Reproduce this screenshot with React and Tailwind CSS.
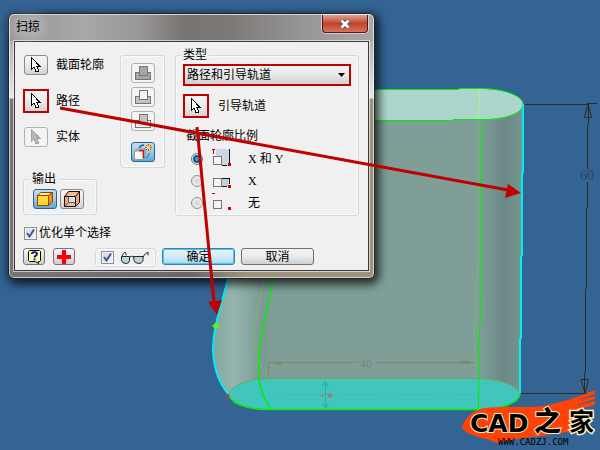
import { useState } from "react";

const toolButton =
  "flex h-5 w-6 shrink-0 items-center justify-center rounded-[3px] border border-[#8a8a8a] bg-linear-to-b from-[#f6f6f6] via-[#ebebeb] to-[#d2d2d2]";
const paleButton =
  "flex h-5 w-6 shrink-0 items-center justify-center rounded-[3px] border border-[#adb2b5] bg-[#f4f4f4]";
const activeButton =
  "flex h-5 w-6 shrink-0 items-center justify-center rounded-[3px] border border-[#2c628b] bg-linear-to-b from-[#c3dcec] via-[#9ccbe8] to-[#5fa9d6]";
const pickButton =
  "flex h-6 w-[26px] shrink-0 items-center justify-center border-2 border-[#c00000] bg-linear-to-b from-[#f6f6f6] via-[#ebebeb] to-[#d2d2d2]";
const groupBox = "rounded-[3px] border border-[#d0dae3] shadow-[inset_0_0_0_1px_#fafafa]";

function CursorIcon({ disabled }) {
  return (
    <svg width="12" height="16" viewBox="0 0 12 16" shapeRendering="crispEdges">
      <path
        d="M1.5 0.5V12.5L4 10L6 14.5H8.5V13L7 9.5H10L1.5 0.5Z"
        fill={disabled ? "#b8b8b8" : "#fff"}
        stroke={disabled ? "#a2a2a2" : "#000"}
      />
    </svg>
  );
}

function PrintIcon({ top, bottom }) {
  return (
    <svg width="18" height="16" viewBox="0 0 18 16" shapeRendering="crispEdges" stroke="#747474">
      <path d="M1.500 7.500H16.500V14.500H1.500Z" fill={bottom} />
      <path d="M5.500 1.500H13.500V10.500H5.500Z" fill={top} />
    </svg>
  );
}

function NewSolidIcon() {
  return (
    <svg width="20" height="18" viewBox="0 0 20 18">
      <path d="M2 8L5 6H12L10 8Z" fill="#fff" stroke="#888" />
      <path d="M10 8L12 6V13L10 16Z" fill="#d8d8d8" stroke="#888" />
      <path d="M1.500 8H10V16.500H1.500Z" fill="#f8f8f8" stroke="#999" />
      <path d="M6 5C7 3 8 2 11 2" fill="none" stroke="#1668b0" strokeWidth="1.300" />
      <path d="M6 7.500H10.500V15" fill="none" stroke="#e01010" strokeWidth="1.300" />
      <path d="M13 15C15 14 16 12 16 10" fill="none" stroke="#1668b0" />
      <path d="M15.500 1V8M12 4.500H19M13 2L18 7M18 2L13 7" stroke="#d84a00" />
      <circle cx="15.500" cy="4.500" r="1.700" fill="#ffe650" />
    </svg>
  );
}

function SolidIcon() {
  return (
    <svg width="18" height="16" viewBox="0 0 18 16" stroke="#a63a00" strokeLinejoin="round">
      <path d="M1.500 4.500L5 1.500H16.500L12.500 4.500Z" fill="#fff3b0" />
      <path d="M12.500 4.500L16.500 1.500V11L12.500 14.500Z" fill="#dba000" />
      <path d="M1.500 4.500H12.500V14.500H1.500Z" fill="#ffdc35" />
    </svg>
  );
}

function SurfaceIcon() {
  return (
    <svg width="18" height="17" viewBox="0 0 18 17" stroke="#111" strokeLinejoin="round">
      <path d="M1.500 5.500L5.500 0.500H16.500L12.500 5.500ZM1.500 15.500L5.500 11.500H16.500L12.500 15.500Z" fill="#f8bb90" stroke="none" />
      <path d="M1.500 5.500L5.500 0.500V11.500L1.500 15.500ZM12.500 5.500L16.500 0.500V11.500L12.500 15.500Z" fill="#f3a474" stroke="none" />
      <path d="M5.500 5.500H12.500V11.500H5.500Z" fill="#dce2ec" stroke="none" />
      <path d="M5.500 5.500V11.500H12.500" fill="none" stroke="#56586a" />
      <path d="M1.500 15.500L5.500 11.500" stroke="#56586a" />
      <path d="M1.500 5.500H12.500V15.500H1.500ZM1.500 5.500L5.500 0.500H16.500L12.500 5.500M16.500 0.500V11.500L12.500 15.500" fill="none" />
    </svg>
  );
}

function HelpIcon() {
  return (
    <svg width="15" height="15" viewBox="0 0 15 15">
      <path d="M2.500 1.500H12.500L13.500 2.500V11.500L12.500 12.500H11.500V14.500L8.500 12.500H2.500L1.500 11.500V2.500Z" fill="#ffffb0" stroke="#000" />
      <path d="M5 5C5 2.500 10 2.500 10 5C10 6.800 7.500 6.500 7.500 8.500M7.500 9.500V11.300" fill="none" stroke="#10108c" strokeWidth="1.900" />
    </svg>
  );
}

function GlassesIcon() {
  return (
    <svg width="30" height="14" viewBox="0 0 30 14" fill="none" stroke="#2a2a2a" strokeLinecap="round">
      <path d="M2 5.500H9.500V10Q9 12.500 6 12.500Q2 12.500 1.500 9.500Z" fill="#bdd5da" />
      <path d="M14 5.500H23V9.500Q22 12.500 19 12.500Q14.500 12.500 14 9.500Z" fill="#bdd5da" />
      <path d="M9.500 6Q12 4 14 6M1.500 7Q2 3 5 1L6 2.500V4M23 6Q24 3 28 1V4" />
    </svg>
  );
}

function ScaleIcon({ kind }) {
  return (
    <svg width="22" height="22" viewBox="0 0 22 22" shapeRendering="crispEdges">
      {kind === "xy" && (
        <>
          <path d="M5 1H18V18H10V9H5Z" fill="#ccd6e3" />
          <path d="M18.500 1V15M11 17.500H16" stroke="#111" />
          <path d="M1 1.500H4M2.500 1V6" stroke="#c00000" />
        </>
      )}
      {kind === "x" && (
        <>
          <path d="M11 8H18V16H11Z" fill="#c5d0df" />
          <path d="M11 8.500H18.500V14M11 16.500H16" stroke="#111" fill="none" />
        </>
      )}
      {kind === "none" && <path d="M1 1.500H4" stroke="#c00000" />}
      <path d="M2.500 8.500H10.500V16.500H2.500Z" fill="#f4f4f4" stroke="#777" />
      <path d="M17 15H20V18H17Z" fill="#d00000" />
    </svg>
  );
}

function CheckBox({ id, label }) {
  return (
    <span className="grid size-[13px] shrink-0 place-items-center">
      <input
        id={id}
        type="checkbox"
        aria-label={label}
        defaultChecked
        className="peer col-start-1 row-start-1 size-[13px] appearance-none border border-[#8e8f8f] bg-linear-to-br from-[#cfd5dd] to-[#f6f6f6] shadow-[inset_0_0_0_1px_#f4f4f4]"
      />
      <svg
        width="9"
        height="9"
        viewBox="0 0 9 9"
        className="pointer-events-none invisible col-start-1 row-start-1 peer-checked:visible"
      >
        <path d="M1 4L3.500 7.500L8 0.500" fill="none" stroke="#41579b" strokeWidth="2" />
      </svg>
    </span>
  );
}

function Model() {
  return (
    <svg width="600" height="450" viewBox="0 0 600 450" className="absolute top-0 left-0" aria-hidden="true">
      <defs>
        <linearGradient id="body" gradientUnits="userSpaceOnUse" x1="212" y1="0" x2="523" y2="0">
          <stop offset="0" stopColor="#82a59f" />
          <stop offset="0.070" stopColor="#94b6ae" />
          <stop offset="0.160" stopColor="#7c9993" />
          <stop offset="0.200" stopColor="#7f9e98" />
          <stop offset="0.860" stopColor="#7f9e98" />
          <stop offset="0.940" stopColor="#6b8886" />
          <stop offset="1" stopColor="#78978f" />
        </linearGradient>
      </defs>
      {/* swept solid */}
      <path d="M229 272C224 300 213 322 213 350C214 372 221 384 229 395L260 409H480L520 393L523 104L480 90H229Z" fill="url(#body)" />
      <path d="M229 89H482C507 89 523 97 523 104C523 112 510 118 490 119H453V120H229Z" fill="#acd6cb" />
      <path d="M229 395C232 384 248 379 268 379H478C500 379 520 387 520 394C519 403 501 410 478 410H262C244 408 231 403 229 395Z" fill="#41c6be" />
      <g fill="none" stroke="#00f000">
        <path d="M370 89.500H459V88.500H482C507 89 523 97 523 104C523 112 510 118 490 119.500H453V120.500H370" />
        <path d="M273 278C269 307 259 335 259 355V378C260 392 266 401 271 410" strokeWidth="1.500" />
        <path d="M482.500 120V135M481.500 135V292M480.500 292V318L479 340L478.500 410" />
        <path d="M229 395C231 403 244 409 268 409.500H478C501 410 519 403 520 394" strokeWidth="1.500" />
      </g>
      <g fill="none" stroke="#6fbd6e">
        <path d="M264 278C260 300 254 318 254 338C256 358 262 369 268 378" />
        <path d="M478.500 120V255L476 300L474.500 325V350L476.500 378" />
        <path d="M229 394C233 384 248 379 268 378.500H478C500 379 518 386 520 394" stroke="#76a85c" />
      </g>
      <path d="M479.500 90V98L478.500 119" stroke="#a5f58c" fill="none" />
      <g fill="none" stroke="#00f0f0" strokeWidth="2">
        <path d="M228 276C224 302 213 322 213 350C214 372 220 384 229 395" />
        <path d="M523 104V172L522 173V255L521 256V338L520 339V393" />
      </g>
      <path d="M212 326L216 322.500L220 326L216 329.500Z" fill="#62f020" />
      <path d="M226 394H229V399H226Z" fill="#a33b83" />
      {/* 40 dimension */}
      <g stroke="#7b8a68" fill="none">
        <path d="M268.500 378V362.500H358M375 362.500H475" />
        <path d="M275 363H283M460 362.500H470" strokeWidth="3" />
      </g>
      <text x="360" y="368" fontSize="12" fill="#768773" className="font-['Liberation_Serif',serif]">40</text>
      <g fill="none" stroke="#36aaa2">
        <path d="M325.500 382V407M322.500 385H328.500L325.500 381ZM322.500 404H328.500L325.500 408Z" />
        <path d="M260 394.500H478" strokeDasharray="4 3" opacity="0.400" />
      </g>
      <path d="M322 394.500V397M327 394.500H331V396.500H328" fill="none" stroke="#9c7d78" strokeWidth="2" />
      {/* 60 dimension */}
      <g fill="none" stroke="#2d2d21">
        <path d="M525 104.500H588M587 103.500H597M588.500 104V124L587.500 126V169M587.500 182V207L586.500 209V288L585.500 290V372L584.500 374V393M521 393.500H590" />
        <path d="M588 104L584.500 117.500H591.500L588 104ZM581 379.500H588.500L585 393L581 379.500Z" />
      </g>
      <text x="580" y="180" fontSize="14" fill="#2f4659" className="font-['Liberation_Serif',serif]">60</text>
    </svg>
  );
}

function Logo() {
  return (
    <svg width="135" height="62" viewBox="0 0 135 62" className="absolute top-[388px] left-[460px]" role="img" aria-label="CAD之家">
      <path
        d="M2 39C5 29 13 23 24 20C42 18 65 20 84 18C103 14 118 9 135 2V6L116 13L135 8V11L113 18L135 13V17L116 22L124 22L112 33L118 41L108 44C84 48 60 50 46 53L36 55L30 52L18 49C9 46 3 43 2 39Z"
        fill="#ff4308"
      />
      <text
        x="10"
        y="44"
        fontSize="25"
        fontWeight="700"
        stroke="#f6efbe"
        strokeWidth="2"
        paintOrder="stroke"
        className="font-['DejaVu_Sans',sans-serif]"
      >
        CAD
      </text>
      <text x="74" y="43" fontSize="27" fontWeight="900" stroke="#f6efbe" strokeWidth="2" paintOrder="stroke" className="font-['Noto_Sans_CJK_SC',sans-serif]">
        之
      </text>
      <text x="109" y="43" fontSize="25" fontWeight="700" stroke="#f6efbe" strokeWidth="3" paintOrder="stroke" className="font-['Noto_Sans_CJK_SC',sans-serif]">
        家
      </text>
      <text x="38" y="57" fontSize="9" className="font-['DejaVu_Sans_Mono',monospace]">WWW.CADZJ.COM</text>
    </svg>
  );
}

function Arrows() {
  return (
    <svg width="600" height="450" viewBox="0 0 600 450" className="pointer-events-none absolute top-0 left-0" aria-hidden="true">
      <path d="M60 108L508 190M197 127L214 302" stroke="#c00000" strokeWidth="3" />
      <path d="M521 193L505 198L508 184ZM217 315L208 302L222 300Z" fill="#c00000" />
    </svg>
  );
}

const scales = [
  { value: "xy", label: "X 和 Y" },
  { value: "x", label: "X" },
  { value: "none", label: "无" },
];

function SweepDialog() {
  const [scale, setScale] = useState("xy");

  return (
    <section
      aria-label="扫掠"
      className="absolute top-[13px] left-2 w-[367px] rounded-md border border-[#242424] bg-[linear-gradient(#9a9a9a,#e8e8e8_84px,transparent_85px),linear-gradient(90deg,#777,#686868_50%,#a0937e_65%,#a0937e)] px-[5px] pb-[7px] shadow-[inset_0_0_0_1px_rgba(255,255,255,0.6),2px_3px_10px_2px_rgba(0,0,0,0.75)]"
    >
      <header className="-mx-[4px] flex h-[27px] items-start justify-between rounded-t-[5px] border-t border-[#d5d5d5] bg-[linear-gradient(90deg,#949494,#a8a8a8_20%,#9a9898_35%,#787472_48%,#7c7876_60%,#969594_80%,#a8a8a8)] pr-[5px] pl-1.5">
        <h1 className="mt-1 rounded-full bg-white/20 text-xs leading-4 shadow-[0_0_8px_6px_rgba(255,255,255,0.2)]">扫掠</h1>
        <button
          type="button"
          aria-label="关闭"
          className="flex h-[18px] w-[46px] items-center justify-center rounded-b-[4px] border border-t-0 border-[#4c1c16] bg-linear-to-b from-[#dda097] via-[#c0412b] via-50% to-[#d8735a] shadow-[0_0_0_1px_rgba(255,255,255,0.5)]"
        >
          <svg width="12" height="10" viewBox="0 0 12 10">
            <path d="M2.500 1.500L9.500 8.500M9.500 1.500L2.500 8.500" stroke="#4b4b55" strokeWidth="4.500" />
            <path d="M2.500 1.500L9.500 8.500M9.500 1.500L2.500 8.500" stroke="#fff" strokeWidth="2.800" />
          </svg>
        </button>
      </header>

      <form className="border border-[#3a3a3a] bg-[#f0f0f0] pt-[5px] pr-[9px] pb-[3px] pl-2 shadow-[0_0_0_1px_rgba(255,255,255,0.6)]">
        <div className="flex items-start">
          <div className="w-[97px]">
            <div className="flex h-9 items-center gap-2">
              <button type="button" aria-labelledby="profile-label" className={`${toolButton} ml-px`}>
                <CursorIcon />
              </button>
              <span id="profile-label">截面轮廓</span>
            </div>
            <div className="flex h-9 items-center gap-[7px]">
              <button type="button" aria-labelledby="path-label" className={pickButton}>
                <CursorIcon />
              </button>
              <span id="path-label">路径</span>
            </div>
            <div className="flex h-9 items-center gap-2">
              <button type="button" disabled aria-labelledby="solid-label" className={`${paleButton} ml-px`}>
                <CursorIcon disabled />
              </button>
              <span id="solid-label">实体</span>
            </div>

            <fieldset className={`${groupBox} mt-4 w-[74px] px-[9px] pt-0.5 pb-[5px]`}>
              <legend className="-ml-1 bg-[#f0f0f0] px-[3px]">输出</legend>
              <div className="flex gap-[3px]">
                <button type="button" aria-label="实体" className={activeButton}>
                  <SolidIcon />
                </button>
                <button type="button" aria-label="曲面" className={toolButton}>
                  <SurfaceIcon />
                </button>
              </div>
            </fieldset>
          </div>

          <div className={`${groupBox} mt-2 flex w-[45px] flex-col items-center gap-1 pt-[7px] pb-[5px]`}>
            <button type="button" aria-label="求并" className={paleButton}>
              <PrintIcon top="#a6a6a6" bottom="#a6a6a6" />
            </button>
            <button type="button" aria-label="求差" className={paleButton}>
              <PrintIcon top="#f4f4f4" bottom="#c2c2c2" />
            </button>
            <button type="button" aria-label="求交" className={paleButton}>
              <PrintIcon top="#c2c2c2" bottom="#ededed" />
            </button>
            <button type="button" aria-label="新建实体" className={`${activeButton} mt-[7px]`}>
              <NewSolidIcon />
            </button>
          </div>

          <fieldset className={`${groupBox} ml-2.5 min-w-0 flex-1 px-[7px] pb-px`}>
            <legend className="-ml-0.5 bg-[#f0f0f0] px-0.5">类型</legend>
            <div className="mt-px grid items-center">
              <select
                aria-label="类型"
                className="col-start-1 row-start-1 h-[22px] w-full appearance-none border-2 border-[#c00000] bg-linear-to-b from-[#f3f3f3] via-[#e8e8e8] to-[#d0d0d0] pl-0.5"
              >
                <option>路径和引导轨道</option>
              </select>
              <svg width="7" height="4" viewBox="0 0 7 4" className="pointer-events-none col-start-1 row-start-1 mr-1.5 justify-self-end">
                <path d="M0 0H7L3.500 4Z" />
              </svg>
            </div>
            <div className="mt-2 flex items-center gap-[9px]">
              <button type="button" aria-labelledby="rail-label" className={pickButton}>
                <CursorIcon />
              </button>
              <span id="rail-label">引导轨道</span>
            </div>
            <div role="radiogroup" aria-labelledby="scale-label" className="mt-2.5">
              <p id="scale-label" className="mb-1 pl-[3px]">截面轮廓比例</p>
              {scales.map(({ value, label }) => (
                <label key={value} className="flex h-[22px] items-center pl-2">
                  <input
                    type="radio"
                    name="scale"
                    value={value}
                    checked={scale === value}
                    onChange={() => setScale(value)}
                    className="size-3 appearance-none rounded-full border border-[#8e8f8f] bg-radial from-[#d2d4d6] to-[#f8f8f8] checked:border-[#55788e] checked:from-[#29a5d8] checked:from-20% checked:via-[#0a3554] checked:via-45% checked:to-[#e4eef3] checked:to-65%"
                  />
                  <span className="ml-2 w-[37px]">
                    <ScaleIcon kind={value} />
                  </span>
                  <span className="font-['Liberation_Serif','Noto_Sans_CJK_SC',serif]">{label}</span>
                </label>
              ))}
            </div>
          </fieldset>
        </div>

        <div className="mt-[9px] flex items-center gap-0.5 pl-px">
          <CheckBox id="optimize" />
          <label htmlFor="optimize">优化单个选择</label>
        </div>

        <div className="mt-[7px] flex h-[19px] items-start">
          <button type="button" aria-label="帮助" className="flex h-[17px] w-[22px] items-center justify-center rounded-[3px] border border-[#777] bg-linear-to-b from-[#f4f4f4] to-[#cfcfcf]">
            <HelpIcon />
          </button>
          <button type="button" aria-label="添加" className="ml-2 flex h-[17px] w-[22px] items-center justify-center rounded-[3px] border border-[#777] bg-linear-to-b from-[#f4f4f4] to-[#cfcfcf]">
            <svg width="14" height="14" viewBox="0 0 14 14" shapeRendering="crispEdges">
              <path d="M5 0H9V5H14V9H9V14H5V9H0V5H5Z" fill="#f80000" />
            </svg>
          </button>
          <div className={`${groupBox} ml-5 flex h-[19px] w-[61px] items-center gap-1.5 pl-[5px]`}>
            <CheckBox id="preview" label="预览" />
            <GlassesIcon />
          </div>
          <button type="submit" onClick={(e) => e.preventDefault()} className="ml-1.5 flex h-[17px] w-[73px] items-center justify-center rounded-[3px] border border-[#3c7fb1] bg-linear-to-b from-[#eaf4fa] via-[#d2eaf6] to-[#a8d8f0] shadow-[inset_0_0_0_1px_#46c8f0]">
            确定
          </button>
          <button type="button" className="ml-1.5 flex h-[17px] w-[73px] items-center justify-center rounded-[3px] border border-[#707070] bg-linear-to-b from-[#f2f2f2] via-[#ebebeb] to-[#cfcfcf]">
            取消
          </button>
        </div>
      </form>
    </section>
  );
}

export default function App() {
  return (
    <main className="relative min-h-screen overflow-hidden bg-[#336494] font-['Liberation_Sans','Noto_Sans_CJK_SC',sans-serif] text-xs leading-4 text-black">
      <Model />
      <Logo />
      <SweepDialog />
      <Arrows />
    </main>
  );
}
